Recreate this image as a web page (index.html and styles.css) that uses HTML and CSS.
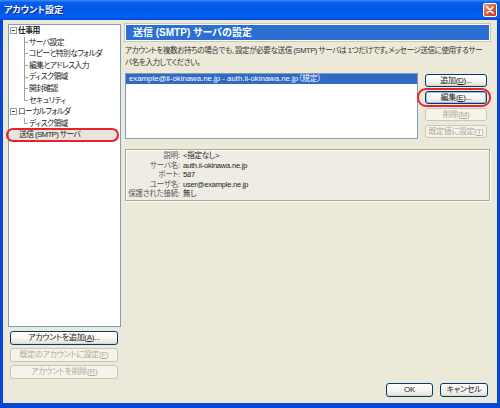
FILE: index.html
```html
<!DOCTYPE html>
<html lang="ja">
<head>
<meta charset="utf-8">
<title>アカウント設定</title>
<link rel="stylesheet" href="styles.css">
</head>
<body>
<div class="window">
  <div class="titlebar">
    <span class="title">アカウント設定</span>
    <span class="close"><svg width="8" height="8" viewBox="0 0 8 8"><path d="M1 1L7 7M7 1L1 7" stroke="#fff" stroke-width="1.7" stroke-linecap="round"/></svg></span>
  </div>
  <div class="frame">
    <div class="leftcol">
      <div class="tree">
        <div class="node"><span class="toggle"></span><b>仕事用</b></div>
        <ul class="children">
          <li><span class="stub"></span>サーバ設定</li>
          <li><span class="stub"></span>コピーと特別なフォルダ</li>
          <li><span class="stub"></span>編集とアドレス入力</li>
          <li><span class="stub"></span>ディスク領域</li>
          <li><span class="stub"></span>開封確認</li>
          <li class="last"><span class="stub"></span>セキュリティ</li>
        </ul>
        <div class="node"><span class="toggle"></span>ローカルフォルダ</div>
        <ul class="children">
          <li class="last"><span class="stub"></span>ディスク領域</li>
        </ul>
        <div class="node sel"><span class="ring"></span>送信 (SMTP) サーバ</div>
      </div>
      <div class="leftbtns">
        <button class="btn">アカウントを追加(<u>A</u>)...</button>
        <button class="btn" disabled>既定のアカウントに設定(<u>F</u>)</button>
        <button class="btn" disabled>アカウントを削除(<u>R</u>)</button>
      </div>
    </div>
    <div class="rightcol">
      <div class="header">送信 (SMTP) サーバの設定</div>
      <p class="desc">アカウントを複数お持ちの場合でも、設定が必要な送信 (SMTP) サーバは 1つだけです。メッセージ送信に使用するサー<br>バ名を入力してください。</p>
      <div class="listrow">
        <div class="list">
          <div class="item">example@ii-okinawa.ne.jp - auth.ii-okinawa.ne.jp（規定）</div>
        </div>
        <div class="sidebtns">
          <button class="btn">追加(<u>D</u>)...</button>
          <span class="ringwrap"><button class="btn focus">編集(<u>E</u>)...</button><span class="ring"></span></span>
          <button class="btn" disabled>削除(<u>M</u>)</button>
          <button class="btn" disabled>既定値に設定(<u>T</u>)</button>
        </div>
      </div>
      <dl class="details">
        <dt>説明:</dt><dd>&lt;指定なし&gt;</dd>
        <dt>サーバ名:</dt><dd>auth.ii-okinawa.ne.jp</dd>
        <dt>ポート:</dt><dd>587</dd>
        <dt>ユーザ名:</dt><dd>user@example.ne.jp</dd>
        <dt>保護された接続:</dt><dd>無し</dd>
      </dl>
      <div class="footer">
        <button class="btn ok">OK</button>
        <button class="btn cancel">キャンセル</button>
      </div>
    </div>
  </div>
</div>
</body>
</html>
```
FILE: styles.css
```css
* { box-sizing: border-box; margin: 0; padding: 0; }
html, body { width: 500px; height: 408px; overflow: hidden; }
body {
  font-family: "Liberation Sans", "Noto Sans CJK JP", sans-serif;
  font-size: 8px;
  color: #222;
  font-feature-settings: "palt";
  background: #ECE9D8;
}
.window { width: 500px; height: 408px; display: flex; flex-direction: column; }
.titlebar {
  height: 20px; flex: none; display: flex; align-items: center;
  padding: 0 3px 0 4px;
  background: linear-gradient(#3D8EFA 0, #0A5EEC 12%, #0055E6 45%, #0461F2 85%, #0347D8 100%);
  color: #fff;
}
.title { font-size: 9px; font-weight: bold; line-height: 20px; text-shadow: 1px 1px #0B2A8C; }
.close {
  margin-left: auto; width: 14px; height: 14px;
  border: 1px solid #fff; border-radius: 2px;
  background: linear-gradient(135deg, #F3A486, #DC5A36 50%, #C43C1C);
  display: flex; align-items: center; justify-content: center;
}
.frame {
  flex: 1; display: flex; gap: 4px;
  border: solid #0A45DA; border-width: 0 3px 5px 3px;
  padding: 4px 7px 6px 5px;
  background: #ECE9D8;
}
.leftcol { width: 113px; flex: none; display: flex; flex-direction: column; }
.tree { height: 303px; background: #fff; border: 1px solid #7F9DB9; font-size: 7.8px; letter-spacing: -0.6px; }
.node, .children li { height: 11.6px; line-height: 11.6px; display: flex; align-items: center; white-space: nowrap; }
.node { padding-left: 1px; }
.node b { font-weight: bold; }
.toggle {
  width: 7px; height: 7px; margin-right: 1px; flex: none;
  border: 1px solid #8A9FB8;
  background: linear-gradient(#333, #333) center / 3px 1px no-repeat, #fff;
}
.children { list-style: none; margin-left: 15px; }
.stub {
  width: 4px; height: 100%; flex: none; margin-right: 1px;
  background: linear-gradient(#A0A0A0, #A0A0A0) left top / 1px 100% no-repeat,
              linear-gradient(#A0A0A0, #A0A0A0) left center / 4px 1px no-repeat;
}
.last .stub {
  background: linear-gradient(#A0A0A0, #A0A0A0) left top / 1px 50% no-repeat,
              linear-gradient(#A0A0A0, #A0A0A0) left center / 4px 1px no-repeat;
}
.node.sel { position: relative; padding-left: 10px; background: #E6E4DB; margin-right: 2px; }
.ring { position: absolute; border: 2px solid #E5232B; border-radius: 7px; pointer-events: none; }
.node.sel .ring { inset: -1px -1px -1px -3px; }
.leftbtns { display: flex; flex-direction: column; gap: 3px; margin: 4px 3px 0 2px; }
.btn {
  height: 14px; font: inherit; font-size: 8px; line-height: 12px;
  border: 1px solid #003C74; border-radius: 3px;
  background: linear-gradient(#FFFFFF, #F6F5F0 55%, #E8E6DC 88%, #D6D0C5);
  color: #222; padding: 0; white-space: nowrap; letter-spacing: -0.3px;
}
.btn:disabled { border-color: #C9C7BA; background: #F5F4EA; color: #ACA899; }
.btn.focus { box-shadow: inset 0 0 0 1px #9DB9EB; }
.rightcol { flex: 1; display: flex; flex-direction: column; min-width: 0; }
.header {
  height: 17px; flex: none; background: #2A6FD1;
  border: 1px solid #fff; box-shadow: 0 0 0 1px #C9C6B6;
  color: #fff; font-size: 10px; font-weight: bold;
  padding-left: 7px; line-height: 15px; white-space: nowrap;
}
.desc { margin-top: 4px; line-height: 11.5px; white-space: nowrap; color: #333; font-size: 7.6px; letter-spacing: -0.45px; }
.listrow { margin-top: 5px; height: 66px; flex: none; display: flex; }
.list { flex: 1; background: #fff; border: 1px solid #7F9DB9; }
.item { height: 10px; line-height: 10px; background: #316AC5; color: #fff; padding-left: 3px; font-size: 7.8px; white-space: nowrap; }
.sidebtns { width: 62px; flex: none; margin: 0 3px 0 7px; padding-top: 1px; display: flex; flex-direction: column; gap: 4px; }
.sidebtns .btn { height: 13px; line-height: 11px; width: 100%; }
.ringwrap { position: relative; display: block; height: 13px; }
.ringwrap .ring { inset: -3px -4px -3px -8px; border-radius: 9px; }
.details {
  margin-top: 10px; height: 52px; flex: none;
  border: 1px solid #ACA899;
  box-shadow: inset 1px 1px #fff, 1px 1px #fff;
  background: #EFEDE3;
  display: grid; grid-template-columns: 54px 1fr; column-gap: 3px;
  align-content: start; padding-top: 1px;
  font-size: 7.5px; line-height: 9.5px; letter-spacing: -0.2px;
}
.details dt { text-align: right; color: #555; white-space: nowrap; }
.details dd { color: #222; white-space: nowrap; }
.footer { margin-top: auto; display: flex; justify-content: flex-end; gap: 7px; padding-right: 2px; }
.footer .ok { width: 47px; }
.footer .cancel { width: 48px; }
```
